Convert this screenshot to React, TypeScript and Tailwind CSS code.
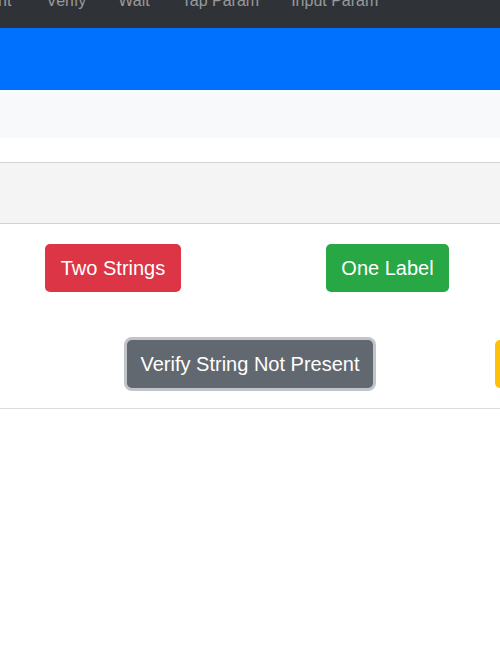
import React from 'react';

const navItems = ['Verify', 'Wait', 'Tap Param', 'Input Param'];

const App = () => {
  return (
    <div className="w-[500px] h-[648px] overflow-hidden bg-white font-['Liberation_Sans',Arial,sans-serif]">
      {/* top nav, scrolled so only the bottom of the labels shows */}
      <div className="h-[28px] bg-[#2f3337] overflow-hidden">
        <div className="flex items-start -mt-[11px] text-[16px] leading-[24px] text-white/50 whitespace-nowrap">
          <span className="pr-[19px] -ml-[2px]">nt</span>
          {navItems.map((item) => (
            <span key={item} className="px-[16px]">
              {item}
            </span>
          ))}
        </div>
      </div>

      <div className="h-[62px] bg-[#0070ff]" />
      <div className="h-[48px] bg-[#f8f9fa]" />
      <div className="h-[24px] bg-white" />

      <div className="h-[62px] bg-[#f4f4f4] border-y border-[#d2d2d2]" />

      <div className="border-b border-[#dcdcdc] pt-[20px] pb-[20px]">
        <div className="flex items-center pl-[45px] gap-[145px]">
          <button className="h-[48px] w-[136px] rounded-[5px] bg-[#dc3545] text-white text-[20px]">
            Two Strings
          </button>
          <button className="h-[48px] w-[123px] rounded-[5px] bg-[#28a745] text-white text-[20px]">
            One Label
          </button>
        </div>
        <div className="flex items-center pl-[127px] gap-[122px] mt-[48px] whitespace-nowrap">
          <button className="h-[48px] w-[246px] shrink-0 rounded-[5px] bg-[#626870] text-white text-[20px] ring-[3px] ring-[#c0c4c8]">
            Verify String Not Present
          </button>
          <button className="h-[48px] w-[120px] shrink-0 rounded-[5px] bg-[#ffc107] text-[#212529] text-[20px]">
            Tap
          </button>
        </div>
      </div>
    </div>
  );
};

export default App;
